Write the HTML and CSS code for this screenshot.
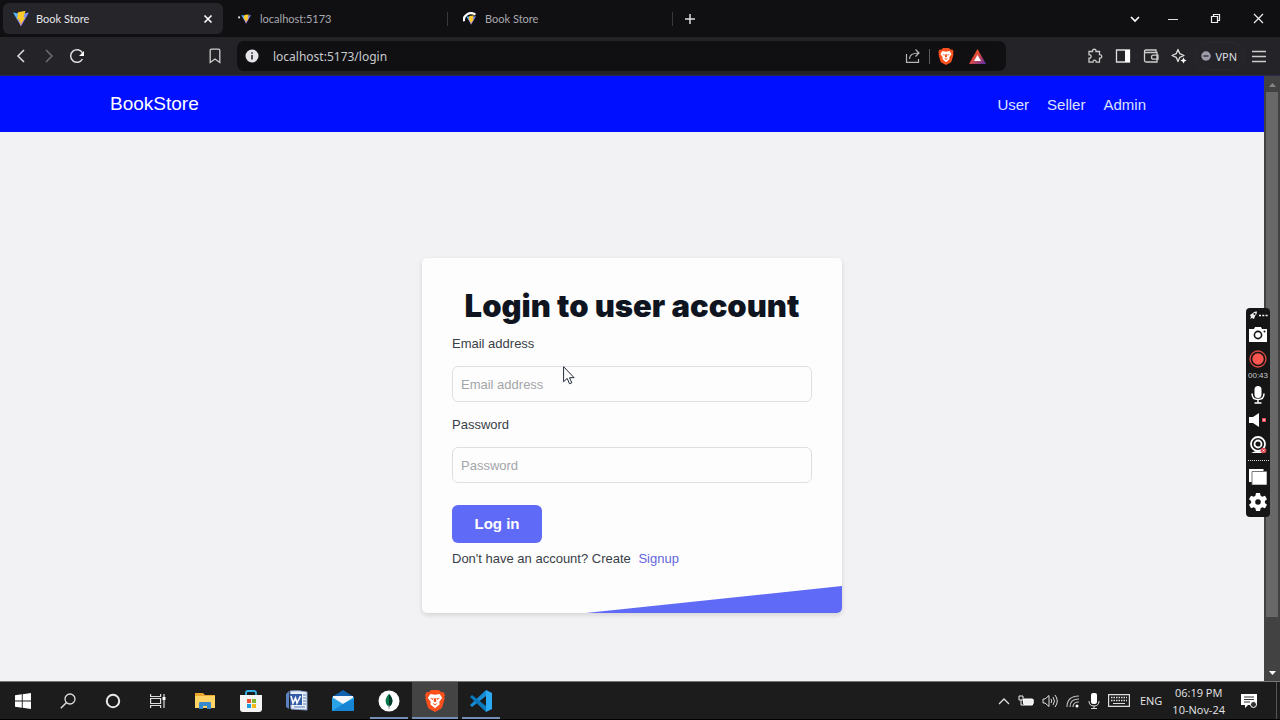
FILE: index.html
```html
<!DOCTYPE html>
<html lang="en">
<head>
<meta charset="utf-8">
<title>Book Store</title>
<link rel="stylesheet" href="styles.css">
</head>
<body>
<svg class="defs" aria-hidden="true">
  <defs>
    <linearGradient id="vite-a" x1="0" y1="0" x2="1" y2="1"><stop offset="0" stop-color="#41c8ff"/><stop offset="1" stop-color="#b848e8"/></linearGradient>
    <linearGradient id="bat" x1="0" y1="0" x2="1" y2="1"><stop offset="0" stop-color="#ff5b20"/><stop offset=".45" stop-color="#e04a3a"/><stop offset="1" stop-color="#5a2fb0"/></linearGradient>
    <symbol id="vite" viewBox="0 0 16 16"><path d="M0 1.500 8 15.600 16 1.500 8.500 3z" fill="url(#vite-a)"/><path d="M11.500 0 5 1.300 4.200 8.400l2-.4-.4 3 1.800-.5-.6 4.200L12.500 6l-2.100.4L12.500 0z" fill="#ffc928"/></symbol>
    <symbol id="brave" viewBox="0 0 20 22"><path d="M6 0h8l2 2.300 2.300-.3L20 5l-.8 2 .5 1.500-2.400 8.300c-.3 1-1 1.800-1.800 2.300L10 22l-5.500-2.900c-.9-.5-1.500-1.300-1.800-2.300L.3 8.500.8 7 0 5l1.700-3 2.300.3z" fill="#fb4f1c"/><path d="M10 4.800 14.600 4l2.600 3.800-3 4.200.5 2.200L10 18.300l-4.700-4.100.5-2.200-3-4.200L5.400 4z" fill="#fff"/><path d="m5 7.800 3.600.8-.9 1.400zm10 0-3.600.8.900 1.400zM9 8.200h2l.4 3.300-1.400.8-1.400-.8zM7.200 13 10 14l2.800-1L10 15.600z" fill="#fb4f1c"/></symbol>
  </defs>
</svg>

<header class="browser">
  <div class="tabs">
    <div class="tab tab-active">
      <svg class="favicon" viewBox="0 0 16 16"><use href="#vite"/></svg>
      <span class="tab-title">Book Store</span>
      <button class="tab-close" aria-label="Close tab"><svg width="10" height="10" viewBox="0 0 10 10"><path d="M1.500 1.500l7 7m0-7-7 7" stroke="#fff" stroke-width="1.700"/></svg></button>
    </div>
    <div class="tab tab-divided">
      <svg class="favicon-small" viewBox="0 0 12 12"><circle cx="1" cy="5" r="1" fill="#ddd"/><svg x="3" y="2" width="9" height="9" viewBox="0 0 16 16"><use href="#vite"/></svg></svg>
      <span class="tab-title">localhost:5173</span>
    </div>
    <div class="tab tab-divided">
      <svg class="favicon-small" viewBox="0 0 12 12"><svg x="3" y="3" width="9" height="9" viewBox="0 0 16 16"><use href="#vite"/></svg><path d="M1 8.500C-.2 3.500 6-1.500 11.500 2.500" fill="none" stroke="#fff" stroke-width="2"/></svg>
      <span class="tab-title">Book Store</span>
    </div>
    <button class="tab-new" aria-label="New tab"><svg width="10" height="10" viewBox="0 0 10 10"><path d="M5 0v10M0 5h10" stroke="#ddd" stroke-width="1.500"/></svg></button>
    <div class="window-controls">
      <button aria-label="Search tabs"><svg width="10" height="8" viewBox="0 0 10 8"><path d="m1 2 4 4 4-4" fill="none" stroke="#fff" stroke-width="1.700"/></svg></button>
      <button aria-label="Minimize"><svg width="10" height="10" viewBox="0 0 10 10"><path d="M0 5.500h10" stroke="#ddd"/></svg></button>
      <button aria-label="Restore"><svg width="11" height="11" viewBox="0 0 11 11"><path d="M1.500 3.500h6v6h-6zM3.500 3.500v-2h6v6h-2" fill="none" stroke="#eee" stroke-width="1.200"/></svg></button>
      <button aria-label="Close"><svg width="11" height="11" viewBox="0 0 11 11"><path d="m1 1 9 9m0-9-9 9" stroke="#eee" stroke-width="1.200"/></svg></button>
    </div>
  </div>
  <div class="toolbar">
    <div class="history">
      <button aria-label="Back"><svg width="16" height="16" viewBox="0 0 16 16"><path d="M11 2 5 8l6 6" fill="none" stroke="#ddd" stroke-width="1.500"/></svg></button>
      <button aria-label="Forward"><svg width="16" height="16" viewBox="0 0 16 16"><path d="m5 2 6 6-6 6" fill="none" stroke="#6c6c72" stroke-width="1.500"/></svg></button>
      <button aria-label="Reload"><svg width="16" height="16" viewBox="0 0 16 16"><path d="M13.500 11A6.300 6.300 0 1 1 13.500 5" fill="none" stroke="#ddd" stroke-width="1.500"/><path d="M15 3v5h-5z" fill="#fff"/></svg></button>
    </div>
    <button class="bookmark" aria-label="Bookmark"><svg width="12" height="16" viewBox="0 0 12 16"><path d="M1.200 2.500q0-1.300 1.300-1.300h7q1.300 0 1.300 1.300v12L6 11l-4.800 3.500z" fill="none" stroke="#ccc" stroke-width="1.300"/></svg></button>
    <div class="omnibox">
      <svg width="14" height="14" viewBox="0 0 14 14"><circle cx="7" cy="7" r="6.500" fill="#e4e4ea"/><path d="M7 6v4.500M7 3.200v1.500" stroke="#333" stroke-width="1.700"/></svg>
      <input class="url" type="text" value="localhost:5173/login" aria-label="Address">
      <svg width="16" height="16" viewBox="0 0 16 16"><path d="M1.500 6v8.300h12V11M4.500 11c0-4 3-6 9.500-6M10.500 1.500 14 5l-3.500 3.500" fill="none" stroke="#b5b5ba" stroke-width="1.200"/></svg>
      <span class="omnibox-line"></span>
      <svg width="16" height="17" viewBox="0 0 20 22"><use href="#brave"/></svg>
      <svg class="rewards" width="17" height="15" viewBox="0 0 17 15"><path d="M8.500 0 17 15H0z" fill="url(#bat)"/><path d="M8.500 6 12 12H5z" fill="#fff"/></svg>
    </div>
    <div class="extensions">
      <button aria-label="Extensions"><svg width="16" height="16" viewBox="0 0 16 16"><path d="M2 3.500h3.500C5 .5 9.500.5 9 3.500h3.500v3.200c3-.5 3 4 0 3.500v4H9.200c.3-2.700-3.500-2.700-3.200 0H2v-4c2.800.3 2.800-3.700 0-3.500z" fill="none" stroke="#ccc" stroke-width="1.300"/></svg></button>
      <button aria-label="Side panel"><svg width="16" height="16" viewBox="0 0 16 16"><path d="M1.500 2h13v12h-13z" fill="none" stroke="#ddd" stroke-width="1.300"/><path d="M10 2h5v12h-5z" fill="#fff"/></svg></button>
      <button aria-label="Wallet"><svg width="16" height="16" viewBox="0 0 16 16"><path d="M1.500 4v8.500q0 1.500 1.500 1.500h11V4.500H3Q1.500 4.500 1.500 3.200 1.500 2 3 2h10v2.500M15 7.200h-4.500a2 2 0 0 0 0 4H15z" fill="none" stroke="#ccc" stroke-width="1.300"/></svg></button>
      <button aria-label="Leo AI"><svg width="16" height="16" viewBox="0 0 16 16"><path d="m7 1.500 1.800 4.200L13 7.500 8.800 9.300 7 13.500 5.200 9.300 1 7.500l4.200-1.800z" fill="none" stroke="#ddd" stroke-width="1.300" stroke-linejoin="round"/><path d="m12.500 9.500 1 2 2 1-2 1-1 2-1-2-2-1 2-1z" fill="#fff"/></svg></button>
      <button class="vpn"><svg width="10" height="10" viewBox="0 0 10 10"><circle cx="5" cy="5" r="4.700" fill="#9c9cac"/><path d="M2.500 5h5" stroke="#29292e" stroke-width="1.300"/></svg>VPN</button>
      <button aria-label="Menu"><svg width="16" height="16" viewBox="0 0 16 16"><path d="M1 3.500h14M1 8.500h14M1 13.500h14" stroke="#ccc" stroke-width="1.300"/></svg></button>
    </div>
  </div>
</header>

<div class="viewport">
  <div class="page">
    <nav class="navbar">
      <a class="brand" href="#">BookStore</a>
      <div class="nav-links"><a href="#">User</a><a href="#">Seller</a><a href="#">Admin</a></div>
    </nav>
    <main class="main">
      <form class="card">
        <h1 class="card-title">Login to user account</h1>
        <label class="field-label" for="email">Email address</label>
        <input class="field" id="email" type="email" placeholder="Email address">
        <label class="field-label" for="password">Password</label>
        <input class="field" id="password" type="password" placeholder="Password">
        <button class="submit" type="button">Log in</button>
        <p class="signup">Don't have an account? Create <a href="#">Signup</a></p>
        <div class="card-wedge"></div>
      </form>
    </main>
  </div>
  <div class="scrollbar">
    <svg width="16" height="16" viewBox="0 0 16 16"><path d="M5 11h7L8.500 7z" fill="#858585"/></svg>
    <div class="scroll-thumb"></div>
    <svg width="16" height="16" viewBox="0 0 16 16"><path d="M5 6h7L8.500 10z" fill="#fff"/></svg>
  </div>
</div>

<footer class="taskbar">
  <div class="task-group task-system">
    <button aria-label="Start"><svg width="16" height="16" viewBox="0 0 16 16"><path d="M0 2.300 6.800 1.300v6.300H0zM7.700 1.200 16 0v7.600H7.700zM0 8.500h6.800v6.300L0 13.800zM7.700 8.500H16V16l-8.300-1.200z" fill="#fff"/></svg></button>
    <button aria-label="Search"><svg width="16" height="16" viewBox="0 0 16 16"><circle cx="10" cy="6" r="5" fill="none" stroke="#ddd" stroke-width="1.300"/><path d="M6.500 9.500.8 15.200" stroke="#ddd" stroke-width="1.500"/></svg></button>
    <button aria-label="Cortana"><svg width="16" height="16" viewBox="0 0 16 16"><circle cx="8" cy="8" r="6.200" fill="none" stroke="#e8e8e8" stroke-width="2"/></svg></button>
    <button aria-label="Task view"><svg width="16" height="16" viewBox="0 0 16 16"><path d="M.6 1v2.500h10V1M.6 5.500h10v5H.6zM.6 15v-2.500h10V15M14 1v14" fill="none" stroke="#ddd" stroke-width="1.200"/><path d="M12.500 4h3v3h-3z" fill="#fff"/></svg></button>
  </div>
  <div class="task-group task-apps">
    <button aria-label="File Explorer"><svg width="20" height="18" viewBox="0 0 20 18"><path d="M0 1h8l2 2h10v13H0z" fill="#e8a92c"/><path d="M0 4h20v12H0z" fill="#ffd465"/><path d="M4 17v-6q0-1 1-1h10q1 0 1 1v6h-4v-3H8v3z" fill="#3689cf"/></svg></button>
    <button aria-label="Microsoft Store"><svg width="22" height="22" viewBox="0 0 22 22"><path d="M6 6V3q0-2 2-2h6q2 0 2 2v3" fill="none" stroke="#35aee5" stroke-width="1.800"/><path d="M0 5h22v14q0 3-3 3H3q-3 0-3-3z" fill="#f4f4f4"/><path d="M7 9h4v4H7z" fill="#ee5030"/><path d="M12 9h4v4h-4z" fill="#7db82c"/><path d="M7 14h4v4H7z" fill="#1c9dde"/><path d="M12 14h4v4h-4z" fill="#f7b815"/></svg></button>
    <button aria-label="Word"><svg width="22" height="21" viewBox="0 0 22 21"><path d="M4 1q9-1 17 1v18l-16-1z" fill="#eaf0fa" stroke="#839dc9"/><path d="M17 5h3M17 8h3M17 11h3M17 14h3M8 17h11" stroke="#5679b5"/><path d="M0 4 3 1v18l-3-2z" fill="#5d82c4"/><path d="M4 4h12v11H4z" fill="#315da9"/><path d="m5 6 2 7 2.500-5 1.500 5L14.500 6" fill="none" stroke="#fff" stroke-width="1.600"/></svg></button>
    <button aria-label="Mail"><svg width="22" height="21" viewBox="0 0 22 21"><path d="M0 7 11 0l11 7v14H0z" fill="#1261ad"/><path d="M1 6h20v11H1z" fill="#f5f7fa"/><path d="m0 7 11 7 11-7v14H0z" fill="#2ba3e8"/><path d="m0 21 11-7L22 9v12z" fill="#1685d3"/></svg></button>
    <button class="running" aria-label="MongoDB Compass"><svg width="22" height="22" viewBox="0 0 22 22"><circle cx="11" cy="11" r="10.500" fill="#fff"/><path d="M11 4c5 5 4 10 0 13-4-3-5-8 0-13z" fill="#08784c"/><path d="M11 4c5 5 4 10 0 13z" fill="#023a2a"/><path d="M11 15v4" stroke="#999"/></svg></button>
    <button class="running current" aria-label="Brave"><svg width="20" height="22" viewBox="0 0 20 22"><use href="#brave"/></svg></button>
    <button class="running" aria-label="Visual Studio Code"><svg width="24" height="24" viewBox="0 0 24 24"><path d="m17 1 6 3v16l-6 3z" fill="#2aaaf2"/><path d="M17 1v6L3 18l-2-2z" fill="#168bd6"/><path d="M17 23v-6L3 6 1 8z" fill="#087abd"/></svg></button>
  </div>
  <div class="tray">
    <svg width="12" height="8" viewBox="0 0 12 8"><path d="m1 7 5-5 5 5" fill="none" stroke="#ddd" stroke-width="1.300"/></svg>
    <svg width="16" height="16" viewBox="0 0 16 16"><path d="M5.500 6h9v6h-9z" fill="#eee" stroke="#fff"/><path d="M15 7h1v3h-1zM1 3h4v4H1zM3 7v5h3" fill="#222" stroke="#eee"/></svg>
    <svg width="16" height="16" viewBox="0 0 16 16"><path d="M1 6h2l4-3.500v11L3 10H1z" fill="none" stroke="#ddd"/><path d="M9 6q1.500 2 0 4M11 4q3 4 0 8M13 2q4.500 6 0 12" fill="none" stroke="#ddd"/></svg>
    <svg width="14" height="16" viewBox="0 0 14 16"><path d="M1 14Q1 3 13 3M4 14q0-8 9-8M7 14q0-5 6-5" fill="none" stroke="#bbb" stroke-width="1.200"/><circle cx="11" cy="13" r="1.500" fill="#fff"/></svg>
    <svg width="12" height="16" viewBox="0 0 12 16"><rect x="3" y="0" width="6" height="11" rx="2" fill="#fff"/><path d="M1 8q0 5 5 5t5-5M6 13v2.500M3 15.500h6" fill="none" stroke="#ddd"/></svg>
    <svg class="keyboard" width="22" height="13" viewBox="0 0 22 13"><path d="M.6.600h20.800v11.800H.6z" fill="none" stroke="#ddd" stroke-width="1.200"/><path d="M3 3.500h16M3 6.500h16" stroke="#ddd" stroke-width="1.500" stroke-dasharray="1.500 1"/><path d="M5 9.500h12" stroke="#ddd"/></svg>
    <span class="language">ENG</span>
    <div class="clock"><span>06:19 PM</span><span>10-Nov-24</span></div>
    <svg class="notice" width="16" height="16" viewBox="0 0 16 16"><path d="M0 1h16v11H7l-3 3v-3H0z" fill="#fff"/><path d="M3 4h10M3 6.500h10M3 9h6" stroke="#333"/><circle cx="12.500" cy="11.500" r="3" fill="#333" stroke="#fff"/></svg>
  </div>
</footer>

<aside class="recorder">
  <svg width="20" height="9" viewBox="0 0 20 9"><path d="M3 6 2 4l3-2q1-2 4-1.500Q9 4 7 5L6 8 4 7 2 8z" fill="#eee"/><circle cx="6.500" cy="3" r="1" fill="#111"/><path d="M11 4.500h9" stroke="#fff" stroke-width="1.700" stroke-dasharray="2 1.300"/></svg>
  <svg class="rec-camera" width="18" height="15" viewBox="0 0 18 15"><path d="M0 2h5l1-2h6l1 2h5v13H0z" fill="#fff"/><circle cx="9" cy="8" r="3.600" fill="none" stroke="#151515" stroke-width="1.600"/><circle cx="15.500" cy="4.500" r="1" fill="#151515"/></svg>
  <svg width="18" height="18" viewBox="0 0 18 18"><circle cx="9" cy="9" r="8" fill="#151515" stroke="#de4945" stroke-width="1.300"/><circle cx="9" cy="9" r="5.700" fill="#ff5550"/></svg>
  <span class="rec-time">00:43</span>
  <svg width="14" height="18" viewBox="0 0 14 18"><rect x="3.500" width="7" height="12" rx="3.500" fill="#fff"/><path d="M1 7.500q0 6 6 6t6-6M7 13v4M3.500 17h7" fill="none" stroke="#fff" stroke-width="1.500"/></svg>
  <svg width="18" height="16" viewBox="0 0 18 16"><path d="M0 5h4l6-4v14l-6-4H0z" fill="#fff"/><path d="M13 6h4v4h-4z" fill="#df4650"/><path d="m14 7 2 2m0-2-2 2" stroke="#fff" stroke-width=".6"/></svg>
  <svg width="18" height="18" viewBox="0 0 18 18"><circle cx="9" cy="8" r="7" fill="none" stroke="#fff" stroke-width="1.800"/><circle cx="9" cy="8" r="3.500" fill="none" stroke="#fff" stroke-width="1.800"/><path d="M2 17q7-4 13 0z" fill="#fff"/><circle cx="14.500" cy="14.500" r="2.800" fill="#de4650"/><path d="m13.500 13.500 2 2m0-2-2 2" stroke="#fff" stroke-width=".7"/></svg>
  <span class="rec-line"></span>
  <svg width="18" height="16" viewBox="0 0 18 16"><path d="M0 0h14.500v13H0z" fill="#fff"/><path d="M3 2.500h15V16H3z" fill="#fff" stroke="#777"/></svg>
  <svg width="18" height="18" viewBox="0 0 18 18"><path d="M7 0h4l.6 2.700 1.700 1 2.700-.9 2 3.500-2.100 1.800v1.800l2.100 1.800-2 3.500-2.700-.9-1.700 1L11 18H7l-.6-2.700-1.700-1-2.700.9-2-3.500 2.100-1.800V8.100L0 6.300l2-3.500 2.700.9 1.700-1z" fill="#fff"/><circle cx="9" cy="9" r="2.800" fill="#151515"/></svg>
</aside>
<svg class="cursor" width="12" height="19" viewBox="0 0 12 19"><path d="M.6.700v15l3.600-3.300 2.300 5.400 2.300-1-2.300-5.100h4.600z" fill="#fff" stroke="#222b3b"/></svg>
</body>
</html>
```
FILE: styles.css
```css
* { box-sizing: border-box; }
body {
  margin: 0;
  min-height: 100vh;
  display: flex;
  flex-direction: column;
  position: relative;
  overflow: hidden;
  background: #f2f2f5;
  font-family: "Liberation Sans", Arial, sans-serif;
}
svg { display: block; flex: none; }
a { color: inherit; text-decoration: none; }
button {
  margin: 0;
  padding: 0;
  border: 0;
  background: none;
  color: inherit;
  font: inherit;
  display: flex;
  align-items: center;
  justify-content: center;
}
.defs { position: absolute; width: 0; height: 0; }

/* Browser frame */
.browser { background: #242428; color: #dedee2; font-family: "Noto Sans", sans-serif; }
.tabs { display: flex; align-items: center; gap: 5px; height: 37px; padding-left: 3px; background: #101013; }
.tab { display: flex; align-items: center; gap: 9px; width: 220px; height: 31px; padding: 0 10px; color: #a9a9ae; font-family: Lato, sans-serif; font-size: 11px; }
.tab-active { gap: 7px; border-radius: 6px; background: #25252a; color: #e6e6ea; }
.tab-divided { background: linear-gradient(#38383d, #38383d) right center / 1px 14px no-repeat; }
.tab-title { flex: 1; }
.favicon { width: 16px; height: 16px; }
.favicon-small { width: 13px; height: 13px; }
.tab-new { width: 24px; height: 24px; }
.window-controls { display: flex; margin-left: auto; }
.window-controls button { width: 43px; height: 36px; }
.window-controls button:first-child { width: 32px; }
.toolbar { display: flex; align-items: center; height: 39px; padding-right: 13px; border-bottom: 1px solid #2a2a4c; }
.history { display: flex; gap: 12px; padding-left: 13px; }
.bookmark { margin: 0 16px 0 124px; }
.omnibox { display: flex; align-items: center; gap: 8px; flex: 1; height: 30px; padding: 0 20px 0 8px; border-radius: 7px; background: #101013; }
.url { flex: 1; min-width: 0; margin-left: 4px; border: 0; padding: 1px 2px; background: none; color: #cacace; font: 12px "Noto Sans", sans-serif; outline: none; }
.omnibox-line { width: 1px; height: 15px; background: #5a5a60; }
.rewards { margin-left: 7px; }
.extensions { display: flex; align-items: center; gap: 12px; margin-left: 81px; }
.vpn { gap: 4px; margin: 0 -4px; padding: 0 6px; height: 26px; border-radius: 13px; box-shadow: 0 0 0 1px #29292e; font-size: 11px; }

/* Web page */
.viewport { display: flex; flex: 1; }
.page { display: flex; flex: 1; flex-direction: column; background: #f2f2f5; }
.navbar { display: flex; align-items: center; justify-content: space-between; height: 56px; padding: 0 118px 0 110px; background: #000fff; color: #fff; }
.brand { font-size: 19px; }
.nav-links { display: flex; gap: 18px; color: #dfe1ff; font-size: 15px; }
.main { display: flex; flex: 1; flex-direction: column; align-items: center; padding-top: 126px; }
.card {
  display: flex;
  flex-direction: column;
  width: 420px;
  padding: 30px 30px 0;
  border-radius: 5px;
  overflow: hidden;
  background: #fdfdfd;
  box-shadow: 0 2px 5px #0002;
  color: #3a3f47;
  font-size: 13px;
  line-height: 20px;
}
.card-title { margin: 0 -10px 10px; color: #0e1420; font: 900 31px/36px Inter, sans-serif; text-align: center; }
.field-label { margin-bottom: 12px; }
.field { height: 36px; margin-bottom: 13px; padding: 0 8px; border: 1px solid #dedfe2; border-radius: 6px; background: #fdfdfd; color: #333; font: inherit; }
.field::placeholder { color: #a3a5a9; opacity: 1; }
.submit { align-self: flex-start; width: 90px; height: 38px; margin: 9px 0 6px; border-radius: 6px; background: #5f6af6; color: #fff; font-size: 15px; font-weight: 700; }
.signup { margin: 0; }
.signup a { margin-left: 4px; color: #6465dc; }
.card-wedge { height: 27px; margin: 17px -30px 0; background: #5f6af6; clip-path: polygon(39% 100%, 100% 0, 100% 100%); }
.scrollbar { display: flex; flex-direction: column; align-items: center; width: 16px; background: #424242; }
.scroll-thumb { flex: 1; width: 12px; margin-bottom: 48px; background: #686868; }

/* Taskbar */
.taskbar { display: flex; gap: 2px; height: 39px; border-top: 1px solid #777; border-bottom: 1px solid #000; background: #1c1c1c; color: #e5e5e5; font-family: "Open Sans", sans-serif; }
.task-group { display: flex; }
.task-group button { width: 46px; }
.task-system button { width: 45px; }
.running { background: linear-gradient(#7690b4, #7690b4) center bottom / 38px 2px no-repeat; }
.running.current { background: linear-gradient(#7690b4, #7690b4) center bottom / 46px 2px no-repeat #444; }
.tray { display: flex; align-items: center; gap: 8px; margin-left: auto; margin-right: 3px; padding-right: 19px; border-right: 1px solid #555; font-size: 11px; }
.language { margin-left: 2px; }
.clock { display: flex; flex-direction: column; align-items: center; margin: 0 8px 0 2px; font-size: 11px; line-height: 17px; }

/* Floating capture controls */
.recorder {
  position: absolute;
  top: 308px;
  right: 10px;
  display: flex;
  flex-direction: column;
  align-items: center;
  gap: 8px;
  width: 24px;
  padding: 3px 0 6px;
  border-radius: 4px;
  background: #151515;
  color: #ccc;
  font-size: 8px;
  line-height: 8px;
}
.rec-camera { margin-top: -1px; }
.rec-time { margin: -4px 0 -2px; }
.rec-line { width: 21px; margin: -2px 0 0; border-top: 1px dotted #ddd; }
.cursor { position: absolute; left: 563px; top: 366px; }
```
